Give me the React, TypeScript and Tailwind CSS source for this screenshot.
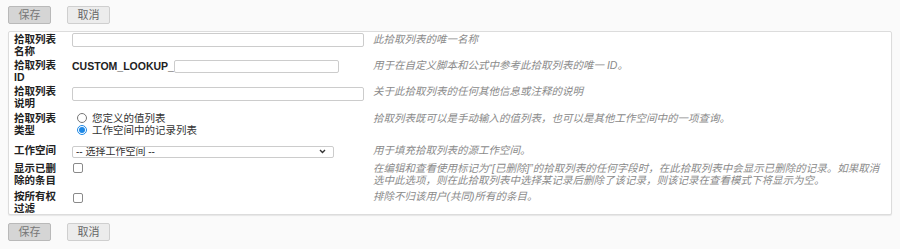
import { useState } from 'react';

const FONT = { fontFamily: '"Liberation Sans", "Noto Sans CJK SC", sans-serif' };

function Buttons() {
  return (
    <div className="flex gap-4 pl-2">
      <button className="h-[18px] w-[43px] rounded-[2px] border border-[#b9b9b9] bg-[#d5d5d5] text-[11px] leading-none text-[#777]">
        保存
      </button>
      <button className="h-[18px] w-[43px] rounded-[2px] border border-[#cfcfcf] bg-[#ececec] text-[11px] leading-none text-[#666]">
        取消
      </button>
    </div>
  );
}

function Row({
  label,
  desc,
  h,
  children,
}: {
  label: React.ReactNode;
  desc: React.ReactNode;
  h: string;
  children?: React.ReactNode;
}) {
  return (
    <div className={`grid grid-cols-[58px_301px_1fr] ${h}`}>
      <div className="text-[10.5px] font-bold leading-[12px] text-[#222]">{label}</div>
      <div>{children}</div>
      <div className="pr-[6px] text-[10.5px] italic leading-[12px] text-[#8a8a8a]">{desc}</div>
    </div>
  );
}

function Check() {
  const [on, setOn] = useState(false);
  return (
    <input
      type="checkbox"
      checked={on}
      onChange={(e) => setOn(e.target.checked)}
      className="ml-[1px] mt-[1px] block h-[10px] w-[10px] appearance-none rounded-[2px] border border-[#8a8a8a] bg-white checked:bg-[#1e88e5]"
    />
  );
}

export default function App() {
  const [kind, setKind] = useState('workspace');

  return (
    <div className="min-h-screen bg-[#fafafa] pt-[6px]" style={FONT}>
      <Buttons />

      <div className="mx-2 mt-[7px] rounded-[2px] border border-[#dcdcdc] bg-white pl-[5px] pt-[1px] shadow-[0_1px_1px_rgba(0,0,0,0.08)]">
        <Row label={<>拾取列表<br />名称</>} desc="此拾取列表的唯一名称" h="h-[26px]">
          <input className="block h-[14px] w-[292px] rounded-[2px] border border-[#cccccc] bg-white" />
        </Row>

        <Row label={<>拾取列表<br />ID</>} desc="用于在自定义脚本和公式中参考此拾取列表的唯一 ID。" h="h-[26px]">
          <div className="mt-[1px] flex items-center">
            <span className="text-[10.5px] font-bold leading-[13px] text-[#222]">CUSTOM_LOOKUP_</span>
            <input className="block h-[13px] w-[165px] rounded-[2px] border border-[#cccccc] bg-white" />
          </div>
        </Row>

        <Row label={<>拾取列表<br />说明</>} desc="关于此拾取列表的任何其他信息或注释的说明" h="h-[27px]">
          <input className="mt-[2px] block h-[14px] w-[292px] rounded-[2px] border border-[#cccccc] bg-white" />
        </Row>

        <Row
          label={<>拾取列表<br />类型</>}
          desc="拾取列表既可以是手动输入的值列表，也可以是其他工作空间中的一项查询。"
          h="h-[32px]"
        >
          <div className="pl-[5px] text-[10.5px] leading-[12px] text-[#333]">
            <label className="flex items-center gap-[5px]">
              <input
                type="radio"
                name="kind"
                checked={kind === 'values'}
                onChange={() => setKind('values')}
                className="m-0 h-[10px] w-[10px] accent-[#1e88e5]"
              />
              您定义的值列表
            </label>
            <label className="flex items-center gap-[5px]">
              <input
                type="radio"
                name="kind"
                checked={kind === 'workspace'}
                onChange={() => setKind('workspace')}
                className="m-0 h-[10px] w-[10px] accent-[#1e88e5]"
              />
              工作空间中的记录列表
            </label>
          </div>
        </Row>

        <Row label="工作空间" desc="用于填充拾取列表的源工作空间。" h="h-[18px]">
          <div className="relative mt-[2px] w-[262px]">
            <select className="block h-[12px] w-full appearance-none rounded-[2px] border border-[#cccccc] bg-white pl-[3px] text-[10px] leading-[10px] text-[#333]">
              <option>-- 选择工作空间 --</option>
            </select>
            <svg
              className="pointer-events-none absolute right-[8px] top-[3px]"
              width="7"
              height="5"
              viewBox="0 0 7 5"
            >
              <path d="M1 1l2.5 2.5L6 1" fill="none" stroke="#333" strokeWidth="1.4" />
            </svg>
          </div>
        </Row>

        <Row
          label={<>显示已删<br />除的条目</>}
          desc={
            <>
              在编辑和查看使用标记为“[已删除]”的拾取列表的任何字段时，在此拾取列表中会显示已删除的记录。如果取消选中此选项，则在此拾取列表中选择某记录后删除了该记录，则该记录在查看模式下将显示为空。
            </>
          }
          h="h-[28px]"
        >
          <Check />
        </Row>

        <Row label={<>按所有权<br />过滤</>} desc="排除不归该用户(共同)所有的条目。" h="h-[24px]">
          <div className="pt-[2px]">
            <Check />
          </div>
        </Row>
      </div>

      <div className="mt-[8px]">
        <Buttons />
      </div>
    </div>
  );
}
